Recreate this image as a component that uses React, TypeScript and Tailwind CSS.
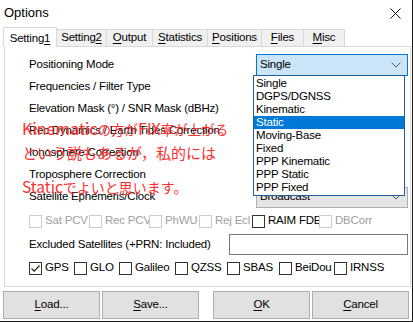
import React from "react";

const FONT = { fontFamily: '"Liberation Sans", Arial, sans-serif' };

function U({ first, rest }: { first: string; rest: string }) {
  return (
    <span>
      <span className="underline underline-offset-2">{first}</span>
      {rest}
    </span>
  );
}

function Check({ label, disabled, checked, w }: { label: string; disabled?: boolean; checked?: boolean; w: string }) {
  return (
    <div className={`flex shrink-0 items-center whitespace-nowrap ${w}`}>
      <span
        className={`flex h-[13px] w-[13px] shrink-0 items-center justify-center border bg-white ${
          disabled ? "border-[#cccccc]" : "border-[#333333]"
        }`}
      >
        {checked ? (
          <svg width="11" height="11" viewBox="0 0 11 11">
            <path d="M1.5 5.5 L4.2 8.2 L9.5 2.5" fill="none" stroke="#222" strokeWidth="1.2" />
          </svg>
        ) : null}
      </span>
      <span className={`ml-[3px] ${disabled ? "text-[#a0a0a0]" : "text-black"}`}>{label}</span>
    </div>
  );
}

function Chevron() {
  return (
    <svg width="10" height="6" viewBox="0 0 10 6" className="shrink-0">
      <path d="M0.5 0.5 L5 5 L9.5 0.5" fill="none" stroke="#555" strokeWidth="1" />
    </svg>
  );
}

const MODES = ["Single", "DGPS/DGNSS", "Kinematic", "Static", "Moving-Base", "Fixed", "PPP Kinematic", "PPP Static", "PPP Fixed"];

export default function App() {
  const rows = [
    "Positioning Mode",
    "Frequencies / Filter Type",
    "Elevation Mask (°) / SNR Mask (dBHz)",
    "Rec Dynamics / Earth Tides Correction",
    "Ionosphere Correction",
    "Troposphere Correction",
    "Satellite Ephemeris/Clock",
  ];
  return (
    <div
      className="relative h-[322px] w-[413px] overflow-hidden border-r border-b border-[#1a1a1a] bg-white text-[11.5px] tracking-[-0.2px] text-black"
      style={FONT}
    >
      {/* ── Title bar ── */}
      <div className="flex h-[26px] items-center justify-between pl-[4px] pr-[11px]">
        <span className="text-[13px] tracking-normal">Options</span>
        <svg width="11" height="11" viewBox="0 0 11 11">
          <path d="M0.5 0.5 L10.5 10.5 M10.5 0.5 L0.5 10.5" stroke="#111" strokeWidth="1" />
        </svg>
      </div>

      {/* ── Tabs ── */}
      <div className="flex h-[20px] items-end pl-[3px] whitespace-nowrap">
        <div className="relative z-10 -mb-px flex h-[20px] w-[54px] items-start justify-center border border-b-0 border-[#d9d9d9] bg-white pt-[2px]">
          <span>
            Setting<span className="underline underline-offset-2">1</span>
          </span>
        </div>
        {[
          ["Setting", "2", "w-[50px]", true],
          ["O", "utput", "w-[46px]", false],
          ["S", "tatistics", "w-[55px]", false],
          ["P", "ositions", "w-[54px]", false],
          ["F", "iles", "w-[42px]", false],
          ["M", "isc", "w-[41px]", false],
        ].map(([a, b, w, suffix]) => (
          <div
            key={String(a) + String(b)}
            className={`flex h-[17px] ${w} items-center justify-center border border-b-0 border-l-0 border-[#d9d9d9] bg-[#f0f0f0]`}
          >
            {suffix ? (
              <span>
                {a}
                <span className="underline underline-offset-2">{b}</span>
              </span>
            ) : (
              <U first={String(a)} rest={String(b)} />
            )}
          </div>
        ))}
      </div>

      {/* ── Tab page ── */}
      <div className="ml-[4px] flex h-[241px] w-[407px] flex-col border border-[#d9d9d9] bg-white pt-[7px] pl-[24px]">
        {rows.map((r, i) => (
          <div key={r} className="flex h-[22px] items-center justify-between pr-[2px]">
            <span>{r}</span>
            {i === 6 ? (
              <div className="flex h-[21px] w-[152px] items-center justify-between border border-[#adadad] bg-[#e5e5e5] pr-[6px] pl-[3px]">
                <span>Broadcast</span>
                <Chevron />
              </div>
            ) : i === 0 ? (
              <div className="flex h-[22px] w-[152px] items-center justify-between border border-[#0078d7] bg-[#cce4f7] pr-[6px] pl-[3px]">
                <span>Single</span>
                <Chevron />
              </div>
            ) : null}
          </div>
        ))}

        <div className="flex h-[26px] items-center">
          <Check label="Sat PCV" disabled w="w-[60px]" />
          <Check label="Rec PCV" disabled w="w-[60px]" />
          <Check label="PhWU" disabled w="w-[50px]" />
          <Check label="Rej Ecl" disabled w="w-[53px]" />
          <Check label="RAIM FDE" w="w-[67px]" />
          <Check label="DBCorr" disabled w="w-[70px]" />
        </div>

        <div className="flex h-[21px] items-center justify-between pr-[2px]">
          <span>Excluded Satellites (+PRN: Included)</span>
          <div className="h-[21px] w-[179px] border border-[#7a7a7a] bg-white" />
        </div>

        <div className="flex h-[26px] items-center">
          <Check label="GPS" checked w="w-[45px]" />
          <Check label="GLO" w="w-[45px]" />
          <Check label="Galileo" w="w-[56px]" />
          <Check label="QZSS" w="w-[52px]" />
          <Check label="SBAS" w="w-[52px]" />
          <Check label="BeiDou" w="w-[55px]" />
          <Check label="IRNSS" w="w-[60px]" />
        </div>
      </div>

      {/* ── Buttons ── */}
      <div className="mt-[4px] flex h-[28px] items-center pl-[3px]">
        <button type="button" className="h-[28px] w-[97px] border border-[#adadad] bg-[#e1e1e1]">
          <U first="L" rest="oad..." />
        </button>
        <button type="button" className="ml-[2px] h-[28px] w-[97px] border border-[#adadad] bg-[#e1e1e1]">
          <U first="S" rest="ave..." />
        </button>
        <button type="button" className="ml-[14px] h-[28px] w-[97px] border border-[#adadad] bg-[#e1e1e1]">
          <U first="O" rest="K" />
        </button>
        <button type="button" className="ml-[2px] h-[28px] w-[97px] border border-[#adadad] bg-[#e1e1e1]">
          <U first="C" rest="ancel" />
        </button>
      </div>

      {/* ── Dropdown list (open) ── */}
      <div className="absolute top-[75px] left-[253px] w-[152px] border border-[#1e5f9e] bg-white py-[1px]">
        {MODES.map((m) => (
          <div
            key={m}
            className={`flex h-[13px] items-center pl-[2px] leading-[13px] ${m === "Static" ? "bg-[#0078d7] text-white" : ""}`}
          >
            {m}
          </div>
        ))}
      </div>

      {/* ── Red annotation ── */}
      <div
        className="pointer-events-none absolute top-[116px] left-[22px] leading-[24px] tracking-normal text-[#ff3030]"
        style={{ fontFamily: '"Noto Sans CJK JP", "Noto Sans", sans-serif' }}
      >
        <div className="text-[13.5px]">
          <span className="text-[16px]">Kinematic</span>の方が<span className="text-[16px]">FIX</span>率が上がる
        </div>
        <div className="text-[15px]">という説もあるが，私的には</div>
        <div className="mt-[9px] text-[14px]">
          <span className="text-[15.5px]">Static</span>でよいと思います。
        </div>
      </div>
    </div>
  );
}
